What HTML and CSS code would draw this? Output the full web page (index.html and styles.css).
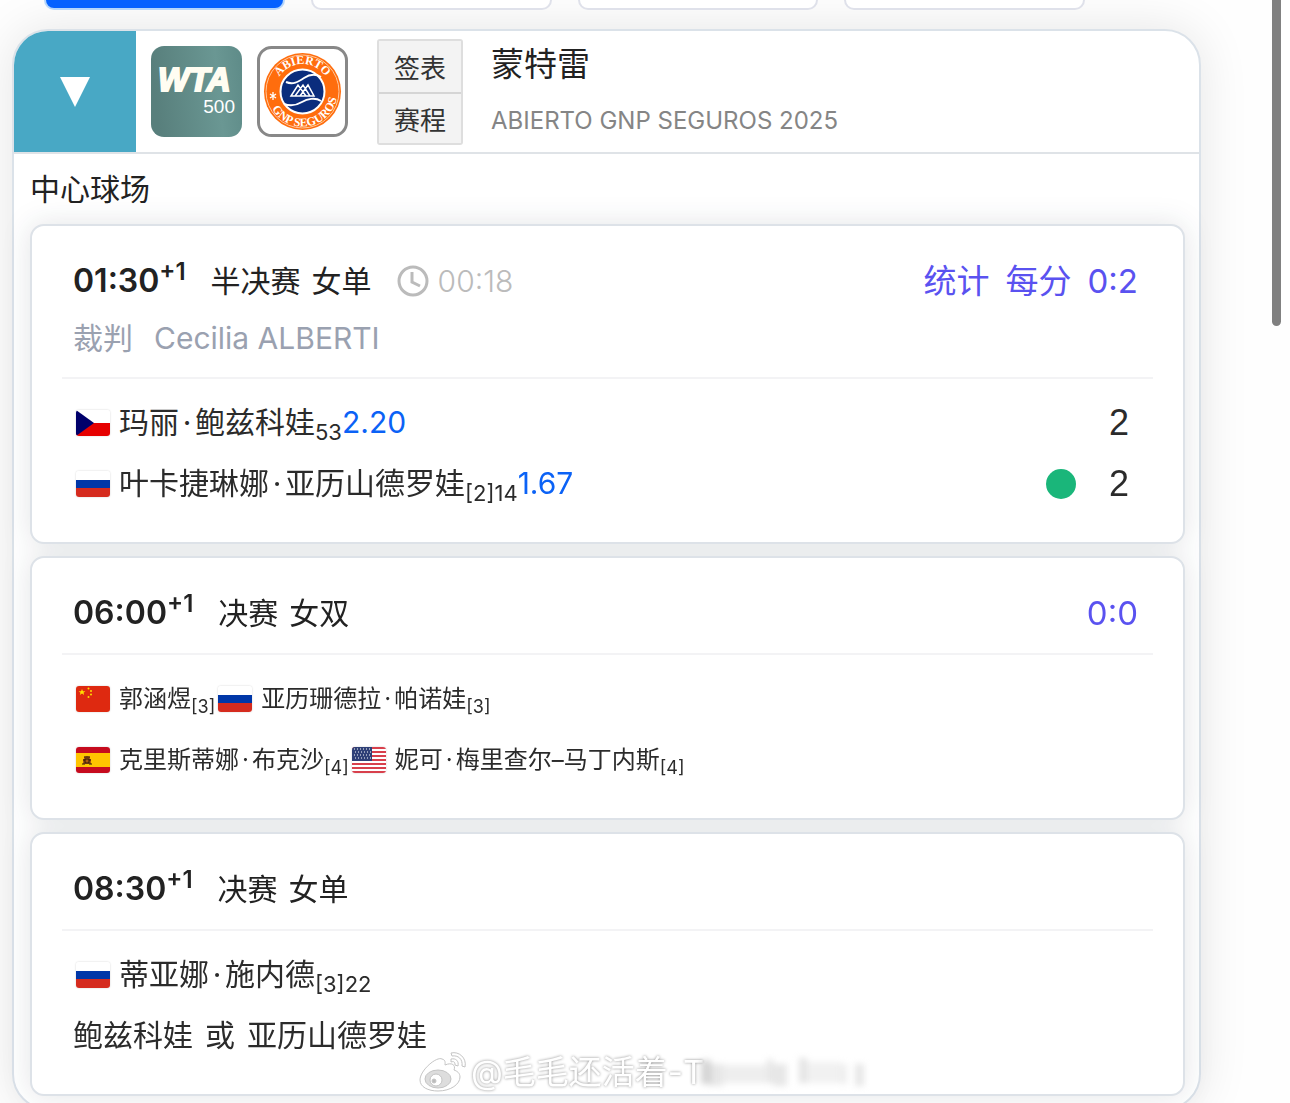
FILE: index.html
```html
<!DOCTYPE html>
<html lang="zh-CN">
<head>
    <meta charset="UTF-8">
    <meta name="viewport" content="width=device-width, initial-scale=1.0">
    <title>蒙特雷 赛程</title>
    <link rel="stylesheet" href="styles.css">
</head>
<body>
    <!-- flags shared by the player rows -->
    <svg class="defs" width="0" height="0" aria-hidden="true">
        <symbol id="flag-cz" viewBox="0 0 34 26">
            <rect width="34" height="26" fill="#fff"/>
            <rect y="13" width="34" height="13" fill="#e60000"/>
            <path d="M0 0L18 13L0 26Z" fill="#00006b"/>
        </symbol>
        <symbol id="flag-ru" viewBox="0 0 34 26">
            <rect width="34" height="26" fill="#fff"/>
            <rect y="9" width="34" height="9" fill="#0037a8"/>
            <rect y="17" width="34" height="9" fill="#d52b1e"/>
        </symbol>
        <symbol id="flag-cn" viewBox="0 0 34 26">
            <rect width="34" height="26" fill="#de2910"/>
            <path d="M6 3l1 2.200h2.400l-1.900 1.500.7 2.300L6 7.600 3.800 9l.7-2.300-1.900-1.500H5z" fill="#ffde00"/>
            <g fill="#ffde00">
                <circle cx="12.500" cy="2.500" r="1"/>
                <circle cx="15" cy="5" r="1"/>
                <circle cx="15" cy="8.500" r="1"/>
                <circle cx="12.500" cy="11" r="1"/>
            </g>
        </symbol>
        <symbol id="flag-es" viewBox="0 0 34 26">
            <rect width="34" height="26" fill="#c60b1e"/>
            <rect y="6" width="34" height="14" fill="#ffc400"/>
            <path d="M7 17v-5h1v-2l3-1 3 1v2h1v5z" fill="#ad5a12"/>
            <path d="M8 10h6M7 13h2m4 0h2M6 17h3m4 0h3M9 12h4v4H9z" fill="none" stroke="#2b1608"/>
        </symbol>
        <symbol id="flag-us" viewBox="0 0 34 26">
            <rect width="34" height="26" fill="#fff"/>
            <path d="M0 1h34M0 5h34M0 9h34M0 13h34M0 17h34M0 21h34M0 25h34" stroke="#d8404c" stroke-width="2"/>
            <rect width="20" height="14" fill="#2f4077"/>
            <path d="M2 2h17M3 5h16M2 8h17M3 11h16" stroke="#fff" stroke-width="1" stroke-dasharray="1 2"/>
        </symbol>
    </svg>

    <nav class="tabs">
        <button class="tab active" aria-label="1"></button>
        <button class="tab" aria-label="2"></button>
        <button class="tab" aria-label="3"></button>
        <button class="tab" aria-label="4"></button>
    </nav>

    <main class="event">
        <header class="event-header">
            <button class="toggle" aria-label="收起">
                <svg width="30" height="30" viewBox="0 0 30 30"><path d="M0 0H30L15 30Z" fill="#fff"/></svg>
            </button>
            <div class="logos">
                <svg width="91" height="91" viewBox="0 0 91 91" role="img" aria-label="WTA 500">
                    <defs>
                        <linearGradient id="wtaBg" x1="0" y1="0.100" x2="1" y2="0">
                            <stop offset="0" stop-color="#587f7c"/>
                            <stop offset="0.700" stop-color="#6a9793"/>
                            <stop offset="1" stop-color="#5e8b88"/>
                        </linearGradient>
                    </defs>
                    <rect width="91" height="91" rx="13" fill="url(#wtaBg)"/>
                    <text x="7" y="45" class="wta-name">WTA</text>
                    <text x="84" y="67" text-anchor="end" class="wta-level">500</text>
                </svg>
                <svg width="91" height="91" viewBox="0 0 91 91" role="img" aria-label="Abierto GNP Seguros">
                    <defs>
                        <path id="arcTop" d="M18 45.500A27.500 27.500 0 0 1 73 45.500"/>
                        <path id="arcBottom" d="M10.500 45.500A35 35 0 0 0 80.500 45.500"/>
                    </defs>
                    <rect x="1.500" y="1.500" width="88" height="88" rx="13" fill="#fff" stroke="#888" stroke-width="3"/>
                    <circle cx="45.500" cy="45.500" r="38.500" fill="#ff6d0d"/>
                    <circle cx="45.500" cy="45.500" r="36.500" fill="none" stroke="#ffc79c"/>
                    <text class="seal"><textPath href="#arcTop" startOffset="50%" text-anchor="middle">ABIERTO</textPath></text>
                    <text class="seal"><textPath href="#arcBottom" startOffset="55%" text-anchor="middle">GNP SEGUROS</textPath></text>
                    <path d="M16 46v8M13 48l6 4M19 48l-6 4" stroke="#fff" stroke-width="1.300"/>
                    <circle cx="45.500" cy="45.500" r="22" fill="#0b2d7d" stroke="#fff" stroke-width="2"/>
                    <g fill="none" stroke="#fff" stroke-width="2">
                        <path d="M29 36c7 3 12 0 18-4s12-4 17-1"/>
                        <path d="M27 58c8 3 13 1 18-2s13-5 19-1"/>
                        <path d="M34 50l7-11 8 11zM38 50l8-11 7 11zM43 50l8-11 6 11zM34 50h23" stroke-width="1.500"/>
                    </g>
                </svg>
            </div>
            <div class="event-actions">
                <button>签表</button>
                <button>赛程</button>
            </div>
            <div class="event-title">
                <h1>蒙特雷</h1>
                <p>ABIERTO GNP SEGUROS 2025</p>
            </div>
        </header>

        <h2 class="court">中心球场</h2>

        <div class="matches">
            <section class="match">
                <div class="match-head">
                    <div class="match-info">
                        <span class="time">01:30<sup>+1</sup></span>
                        <span class="round"><span>半决赛</span> <span>女单</span></span>
                        <span class="duration">
                            <svg width="32" height="32" viewBox="0 0 32 32" fill="none" stroke="#bbb" stroke-width="3"><circle cx="16" cy="16" r="14"/><path d="M15 7v10l8 4"/></svg>
                            00:18
                        </span>
                        <span class="links"><a href="#">统计</a><a href="#">每分</a><a href="#">0:2</a></span>
                    </div>
                    <p class="umpire"><span>裁判</span><span>Cecilia ALBERTI</span></p>
                </div>
                <div class="players">
                    <div class="player">
                        <svg class="flag"><use href="#flag-cz"/></svg>
                        <span>玛丽<i>·</i>鲍兹科娃<sub>53</sub></span><span class="odds">2.20</span>
                        <span class="score">2</span>
                    </div>
                    <div class="player">
                        <svg class="flag"><use href="#flag-ru"/></svg>
                        <span>叶卡捷琳娜<i>·</i>亚历山德罗娃<sub>[2]14</sub></span><span class="odds">1.67</span>
                        <span class="score serving">2</span>
                    </div>
                </div>
            </section>

            <section class="match">
                <div class="match-head">
                    <div class="match-info">
                        <span class="time">06:00<sup>+1</sup></span>
                        <span class="round"><span>决赛</span> <span>女双</span></span>
                        <span class="links"><a href="#">0:0</a></span>
                    </div>
                </div>
                <div class="players doubles">
                    <div class="player">
                        <svg class="flag"><use href="#flag-cn"/></svg>
                        <span>郭涵煜<sub>[3]</sub></span>
                        <svg class="flag"><use href="#flag-ru"/></svg>
                        <span>亚历珊德拉<i>·</i>帕诺娃<sub>[3]</sub></span>
                    </div>
                    <div class="player">
                        <svg class="flag"><use href="#flag-es"/></svg>
                        <span>克里斯蒂娜<i>·</i>布克沙<sub>[4]</sub></span>
                        <svg class="flag"><use href="#flag-us"/></svg>
                        <span>妮可<i>·</i>梅里查尔–马丁内斯<sub>[4]</sub></span>
                    </div>
                </div>
            </section>

            <section class="match">
                <div class="match-head">
                    <div class="match-info">
                        <span class="time">08:30<sup>+1</sup></span>
                        <span class="round"><span>决赛</span> <span>女单</span></span>
                    </div>
                </div>
                <div class="players">
                    <div class="player">
                        <svg class="flag"><use href="#flag-ru"/></svg>
                        <span>蒂亚娜<i>·</i>施内德<sub>[3]22</sub></span>
                    </div>
                    <div class="player undecided">
                        <span>鲍兹科娃</span> <span>或</span> <span>亚历山德罗娃</span>
                    </div>
                </div>
            </section>
        </div>
    </main>

    <div class="watermark">
        <svg width="50" height="42" viewBox="0 0 50 42" fill="#fff" stroke="#c4c4c4">
            <path d="M24 8c-5-3-22 11-22 21 0 7 8 11 18 11 13 0 22-7 22-14 0-4-3-6-6-7 2-5-2-8-9-5 0-2 1-5-3-6z"/>
            <ellipse cx="20" cy="28" rx="13" ry="9" fill="#ddd"/>
            <circle cx="18" cy="29" r="6" fill="#fff"/>
            <circle cx="16" cy="30" r="2" fill="#bbb"/>
            <path d="M33 2c8-2 16 5 14 14l-3-1c1-7-4-11-10-10zM33 8c5-1 8 2 7 7l-3-1c0-3-1-4-4-3z"/>
        </svg>
        <span>@毛毛还活着-T</span>
        <svg class="smudge" width="170" height="36" viewBox="0 0 170 36" fill="#bbb">
            <rect y="6" width="10" height="24" opacity="0.600"/>
            <rect x="8" y="10" width="14" height="22" opacity="0.350"/>
            <rect x="22" y="11" width="44" height="18" opacity="0.250"/>
            <rect x="66" y="5" width="6" height="24" opacity="0.350"/>
            <rect x="72" y="10" width="14" height="22" opacity="0.350"/>
            <rect x="98" y="4" width="8" height="25" opacity="0.400"/>
            <rect x="106" y="8" width="34" height="21" opacity="0.200"/>
            <rect x="140" y="10" width="6" height="20" opacity="0.250"/>
            <rect x="154" y="10" width="9" height="22" opacity="0.350"/>
        </svg>
    </div>
    <div class="scroll-thumb"></div>
</body>
</html>
```
FILE: styles.css
```css
body {
    font-family: Inter, "Noto Sans CJK SC", sans-serif;
    margin: 0;
    padding: 0 89px 0 12px;
    height: 100vh;
    overflow: hidden;
    box-sizing: border-box;
    background-color: #fefefe;
    color: #222;
    font-size: 30px;
}
h1, h2, p {
    margin: 0;
    font-weight: normal;
}
button {
    font-family: inherit;
    padding: 0;
    cursor: pointer;
}
a {
    color: #5a52f0;
    text-decoration: none;
}
.defs {
    position: absolute;
}
.tabs {
    display: grid;
    grid-template-columns: repeat(4, 1fr);
    gap: 26px;
    padding: 0 116px 19px 32px;
}
.tab {
    height: 10px;
    background-color: #fff;
    border: 2px solid #dfe1ea;
    border-top: none;
    border-radius: 0 0 14px 14px;
}
.tab.active {
    background-color: #0561ff;
    border-color: #b5d6fb;
}
.event {
    background-color: #fff;
    border: 2px solid #dbe2e9;
    border-radius: 36px;
    box-shadow: 0 0 50px rgba(0, 0, 0, 0.1);
    padding-bottom: 12px;
}
.event-header {
    display: flex;
    align-items: center;
    height: 121px;
    border-bottom: 2px solid #dfe3e7;
}
.toggle {
    display: flex;
    align-items: center;
    justify-content: center;
    width: 122px;
    height: 100%;
    border: none;
    border-top-left-radius: 34px;
    background-color: #48a8c5;
}
.logos {
    display: flex;
    gap: 15px;
    margin: 0 29px 0 15px;
}
.wta-name {
    font: italic bold 33px "Liberation Sans", Arial, sans-serif;
    fill: #fffdf2;
    stroke: #fffdf2;
    stroke-width: 2px;
}
.wta-level {
    font: 19px "Liberation Sans", Arial, sans-serif;
    fill: #fff;
}
.seal {
    font: bold 12px "Liberation Serif", serif;
    fill: #fff;
}
.event-actions {
    display: flex;
    flex-direction: column;
    border: 2px solid #dedede;
    border-radius: 3px;
}
.event-actions button {
    width: 82px;
    height: 51px;
    border: none;
    background-color: #f3f3f3;
    color: #333;
    font-size: 26px;
}
.event-actions button + button {
    border-top: 2px solid #d5d5d5;
}
.event-title {
    margin-left: 28px;
}
.event-title h1 {
    font-size: 33px;
    line-height: 58px;
}
.event-title p {
    font-size: 24px;
    line-height: 56px;
    color: #858585;
}
.court {
    padding-left: 16px;
    font-size: 30px;
    line-height: 70px;
}
.matches {
    display: flex;
    flex-direction: column;
    gap: 12px;
    margin: 0 14px 0 16px;
    filter: drop-shadow(0 0 14px rgba(20, 30, 50, 0.12));
}
.match {
    background-color: #fff;
    border: 2px solid #dde2e8;
    border-radius: 14px;
    padding: 25px 30px 28px;
}
.match-head {
    padding: 0 15px 10px 11px;
    border-bottom: 2px solid #f3f3f5;
}
.match-info {
    display: flex;
    align-items: center;
    line-height: 60px;
}
.time {
    font-size: 32px;
    font-weight: 600;
    margin-right: 25px;
}
.time sup {
    font-size: 24px;
    line-height: 0;
}
.round {
    display: flex;
    gap: 11px;
}
.duration {
    display: flex;
    align-items: center;
    gap: 9px;
    margin-left: 25px;
    color: #bbb;
    font-weight: 300;
}
.links {
    display: flex;
    gap: 16px;
    margin-left: auto;
    font-size: 33px;
}
.umpire {
    display: flex;
    gap: 21px;
    padding-bottom: 2px;
    line-height: 54px;
    color: #9aa1b0;
}
.players {
    padding: 13px 24px 0 11px;
    color: #2b2b2b;
}
.player {
    display: flex;
    align-items: center;
    line-height: 61px;
}
.player i {
    display: inline-block;
    width: 16px;
    font-style: normal;
    text-align: center;
}
.player sub {
    font-size: 22px;
    line-height: 0;
}
.undecided {
    gap: 12px;
}
.doubles {
    font-size: 24px;
}
.doubles i {
    width: 13px;
}
.doubles sub {
    font-size: 18px;
}
.flag {
    width: 34px;
    height: 26px;
    margin: 0 9px 0 3px;
    border-radius: 3px;
    box-shadow: 0 0 2px rgba(0, 0, 0, 0.2);
}
.odds {
    color: #0b62f6;
}
.score {
    display: flex;
    align-items: center;
    gap: 33px;
    margin-left: auto;
    font-family: "Liberation Sans", Arial, sans-serif;
    font-size: 36px;
}
.serving::before {
    content: "";
    width: 30px;
    height: 30px;
    border-radius: 50%;
    background-color: #1ab67a;
}
.watermark {
    position: fixed;
    left: 418px;
    bottom: 8px;
    display: flex;
    align-items: center;
    gap: 3px;
    color: #fff;
    font-size: 33px;
    line-height: 46px;
    text-shadow: 0 0 3px #888;
}
.smudge {
    margin-left: -6px;
    filter: blur(3px);
}
.scroll-thumb {
    position: fixed;
    top: 0;
    right: 9px;
    width: 9px;
    height: 326px;
    border-radius: 0 0 5px 5px;
    background-color: #808080;
}
```
